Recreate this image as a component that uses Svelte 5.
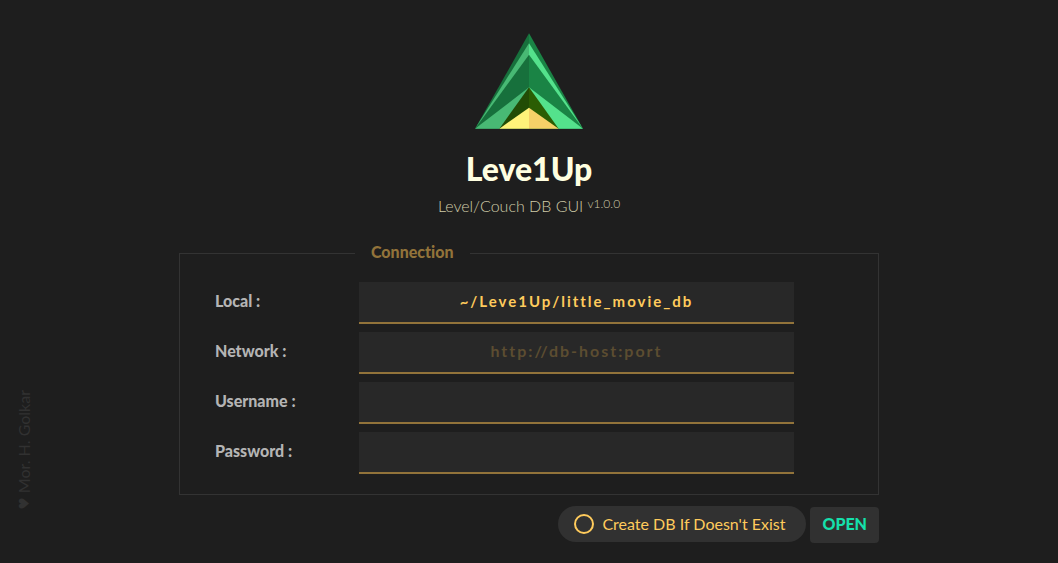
<script>
  let local = $state('~/Leve1Up/little_movie_db');
  let network = $state('');
  let username = $state('');
  let password = $state('');
  let create = $state(false);
</script>

<main>
  <header>
    <svg class="logo" viewBox="30 24 324 288" aria-hidden="true">
      <path fill="#17703c" d="M192 25 30 311H192z" />
      <path fill="#1a8445" d="M192 25 354 311H192z" />
      <path fill="#48b974" d="M192 55 30 311 192 89z" />
      <path fill="#54e28c" d="M192 55 354 311 192 89z" />
      <path fill="#48b974" d="M192 187 30 311H192z" />
      <path fill="#54e28c" d="M192 187 354 311H192z" />
      <path fill="#224c05" d="M192 187 103 311H192z" />
      <path fill="#2b5d03" d="M192 187 281 311H192z" />
      <path fill="#fff37a" d="M192 248 103 311H192z" />
      <path fill="#f6d168" d="M192 248 281 311H192z" />
    </svg>
    <h1>Leve1Up</h1>
    <p class="tagline">Level/Couch DB GUI <sup>v1.0.0</sup></p>
  </header>

  <form onsubmit={(e) => e.preventDefault()}>
    <fieldset>
      <legend>Connection</legend>
      <div class="row">
        <label for="local">Local :</label>
        <input id="local" class="path" type="text" bind:value={local} />
      </div>
      <div class="row">
        <label for="network">Network :</label>
        <input id="network" type="text" placeholder="http://db-host:port" bind:value={network} />
      </div>
      <div class="row">
        <label for="username">Username :</label>
        <input id="username" type="text" bind:value={username} />
      </div>
      <div class="row">
        <label for="password">Password :</label>
        <input id="password" type="password" bind:value={password} />
      </div>
    </fieldset>
    <div class="actions">
      <label class="toggle">
        <input type="checkbox" bind:checked={create} />
        Create DB If Doesn't Exist
      </label>
      <button type="submit">OPEN</button>
    </div>
  </form>
</main>
<aside><span class="heart">♥</span> Mor. H. Golkar</aside>

<style>
  :global(body) {
    background: #1e1e1e;
  }
  main, aside, input, button {
    font-family: Lato, "Liberation Sans", sans-serif;
    font-size: 16px;
    text-rendering: optimizeSpeed;
  }
  main {
    box-sizing: border-box;
    max-width: 700px;
    margin: 0 auto;
    padding-top: 33px;
    line-height: 20px;
  }
  header {
    display: flex;
    flex-direction: column;
    align-items: center;
  }
  .logo {
    width: 108px;
    height: 96px;
  }
  h1 {
    margin: 20px 0 0;
    color: #ffffe0;
    font-size: 32px;
    font-weight: 900;
    line-height: 40px;
  }
  .tagline {
    margin: 7px 0 0;
    color: #d0cba8;
    font-weight: 300;
  }
  sup {
    font-size: 12px;
    line-height: 0;
    vertical-align: 4px;
  }
  fieldset {
    margin: 26px 0 0;
    padding: 18px 5% 20px;
    border: 1px solid #333;
    min-width: 0;
  }
  legend {
    margin-left: 140px;
    padding: 0 16px 2px;
    color: #92733a;
    font-weight: 900;
  }
  .row {
    display: grid;
    grid-template-columns: 144px minmax(0, 435px);
    align-items: center;
  }
  .row + .row {
    margin-top: 8px;
  }
  .row label {
    color: #b4b4b4;
    font-weight: 900;
    padding-bottom: 4px;
  }
  .row input {
    box-sizing: border-box;
    width: 100%;
    height: 42px;
    margin: 0;
    padding: 0 8px 4px;
    border: 0;
    border-bottom: 2px solid #92733a;
    background: #282828;
    color: #ffcb5c;
    font-weight: 700;
    letter-spacing: 2px;
    text-align: center;
    outline: 0;
  }
  .row .path {
    padding-bottom: 2px;
    font-size: 15px;
  }
  .row input::placeholder {
    color: #5c4d31;
    opacity: 1;
  }
  .actions {
    display: flex;
    justify-content: flex-end;
    gap: 4px;
    margin-top: 11px;
  }
  .toggle {
    box-sizing: border-box;
    display: flex;
    align-items: center;
    gap: 8px;
    min-width: 248px;
    height: 36px;
    padding: 0 16px;
    border-radius: 18px;
    background: #313131;
    color: #ffcb5c;
  }
  .toggle input {
    appearance: none;
    box-sizing: border-box;
    width: 20px;
    height: 20px;
    margin: 0;
    border: 2px solid #ffcb5c;
    border-radius: 50%;
  }
  .toggle input:checked {
    background: #ffcb5c;
  }
  button {
    height: 36px;
    margin-top: 1px;
    padding: 0 12px 3px;
    border: 0;
    border-radius: 4px;
    background: #313131;
    color: #15e0ac;
    font-weight: 900;
  }
  aside {
    position: absolute;
    left: 14px;
    bottom: 53px;
    color: #313131;
    line-height: 20px;
    writing-mode: vertical-rl;
    transform: rotate(180deg);
  }
  .heart {
    font-family: "DejaVu Sans", sans-serif;
    font-size: 14px;
    text-orientation: sideways;
  }
</style>
